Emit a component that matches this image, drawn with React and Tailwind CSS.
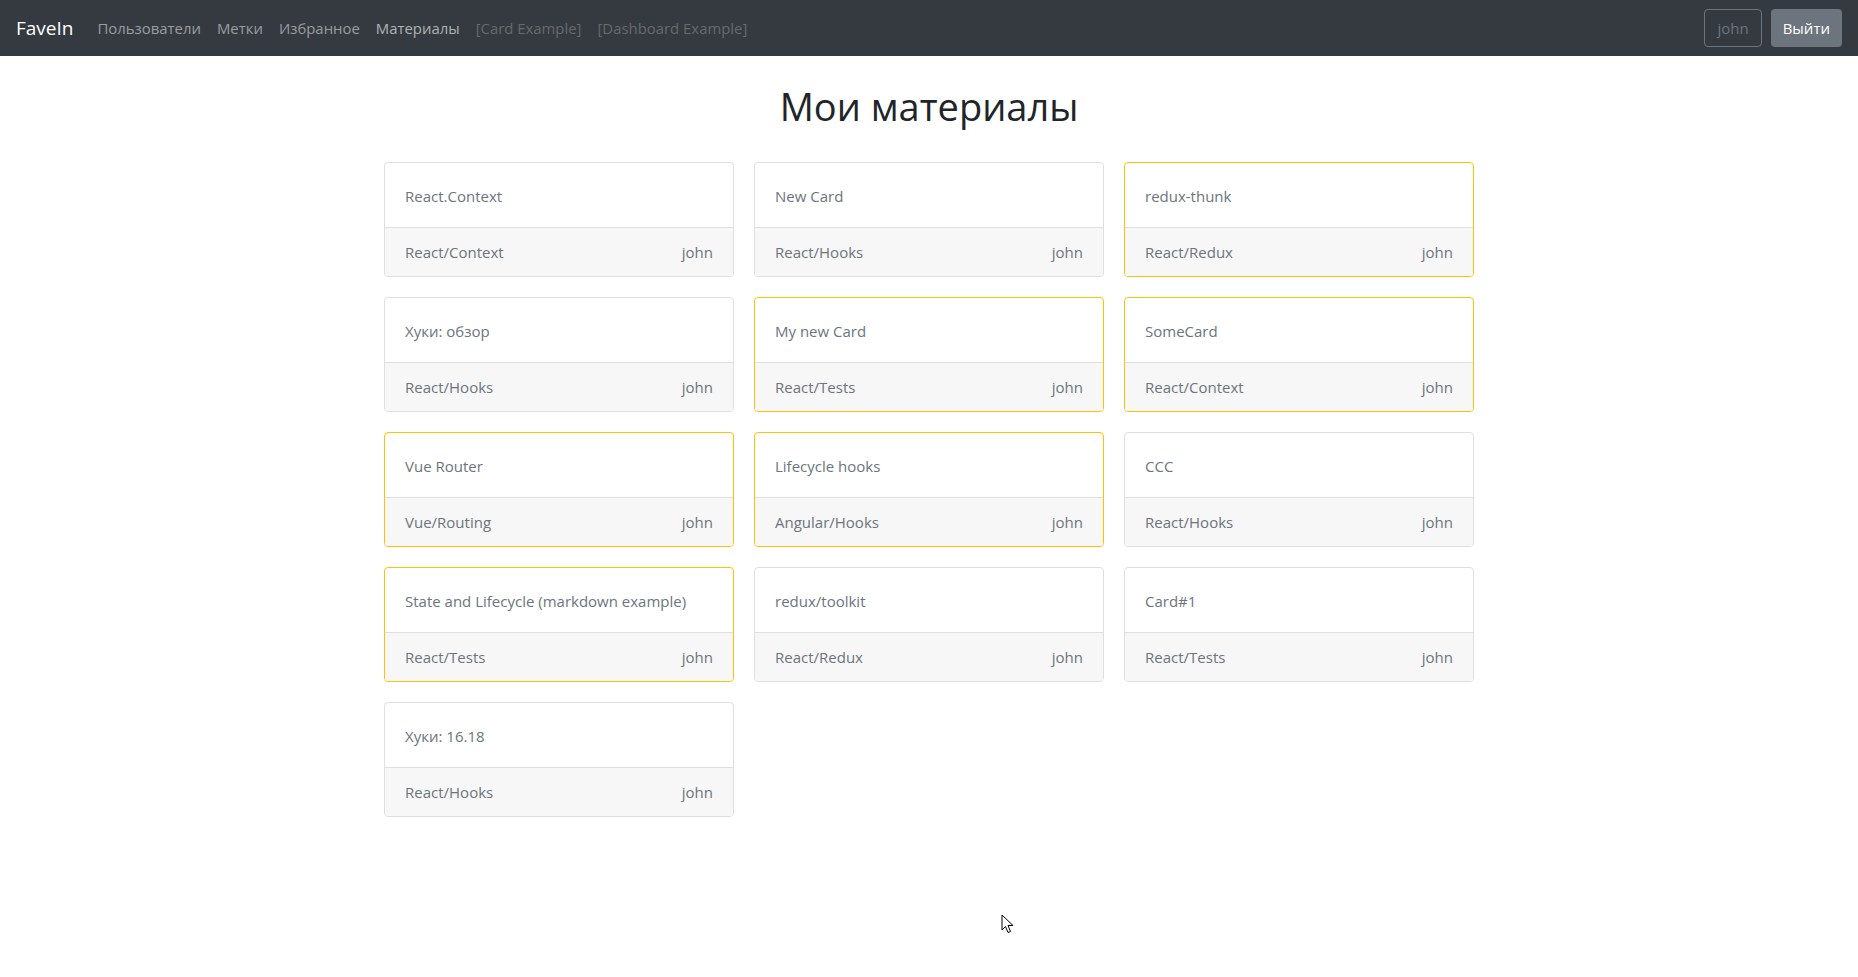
import React from "react";

const cards = [
  { title: "React.Context", tag: "React/Context", fav: false },
  { title: "New Card", tag: "React/Hooks", fav: false },
  { title: "redux-thunk", tag: "React/Redux", fav: true },
  { title: "Хуки: обзор", tag: "React/Hooks", fav: false },
  { title: "My new Card", tag: "React/Tests", fav: true },
  { title: "SomeCard", tag: "React/Context", fav: true },
  { title: "Vue Router", tag: "Vue/Routing", fav: true },
  { title: "Lifecycle hooks", tag: "Angular/Hooks", fav: true },
  { title: "CCC", tag: "React/Hooks", fav: false },
  { title: "State and Lifecycle (markdown example)", tag: "React/Tests", fav: true },
  { title: "redux/toolkit", tag: "React/Redux", fav: false },
  { title: "Card#1", tag: "React/Tests", fav: false },
  { title: "Хуки: 16.18", tag: "React/Hooks", fav: false },
];

const navLinks = ["Пользователи", "Метки", "Избранное", "Материалы"];

const Card = ({ card }) => (
  <div
    className={
      "flex flex-col rounded-[4px] border bg-white " +
      (card.fav ? "border-[#ffc107]" : "border-[#dfdfdf]")
    }
  >
    <div className="px-5 pt-[21px] pb-[19px] leading-6 text-[#6c757d]">{card.title}</div>
    <div className="flex justify-between border-t border-[#dfdfdf] bg-[#f7f7f7] px-5 py-3 leading-6 text-[#6c757d] rounded-b-[3px]">
      <span>{card.tag}</span>
      <span>john</span>
    </div>
  </div>
);

const App = () => {
  return (
    <div
      className="relative min-h-[977px] bg-white text-[15px]"
      style={{ fontFamily: '"Open Sans", "Noto Sans", sans-serif' }}
    >
      <nav className="flex h-14 items-center justify-between bg-[#343a40] px-4">
        <div className="flex items-center text-[14.9px]">
          <span className="mr-4 text-[19px] text-white">FaveIn</span>
          {navLinks.map((l) => (
            <a
              key={l}
              className={
                "px-2 " +
                (l === "Материалы" ? "text-[#b0b2b4]" : "text-[#9a9da0]")
              }
            >
              {l}
            </a>
          ))}
          <a className="px-2 text-[#67696c]">[Card Example]</a>
          <a className="px-2 text-[#67696c]">[Dashboard Example]</a>
        </div>
        <div className="flex items-center gap-[9px]">
          <button className="h-[38px] rounded-[4px] border border-[#6c757d] px-3 text-[#6c757d]">
            john
          </button>
          <button className="h-[38px] rounded-[4px] bg-[#6c757d] px-3 text-white">
            Выйти
          </button>
        </div>
      </nav>

      <h1 className="pt-[26px] text-center text-[38px] leading-[48px] text-[#212529]">
        Мои материалы
      </h1>

      <div className="mx-auto mt-[32px] grid w-[1090px] grid-cols-3 gap-5">
        {cards.map((c, i) => (
          <Card key={i} card={c} />
        ))}
      </div>

      <svg
        className="absolute left-[1001px] top-[914px]"
        width="13"
        height="20"
        viewBox="0 0 13 20"
      >
        <path
          d="M1 1 L1 16 L4.5 12.5 L7 18.5 L9.5 17.5 L7 11.5 L12 11.5 Z"
          fill="white"
          stroke="black"
          strokeWidth="1"
          strokeLinejoin="round"
        />
      </svg>
    </div>
  );
};

export default App;
